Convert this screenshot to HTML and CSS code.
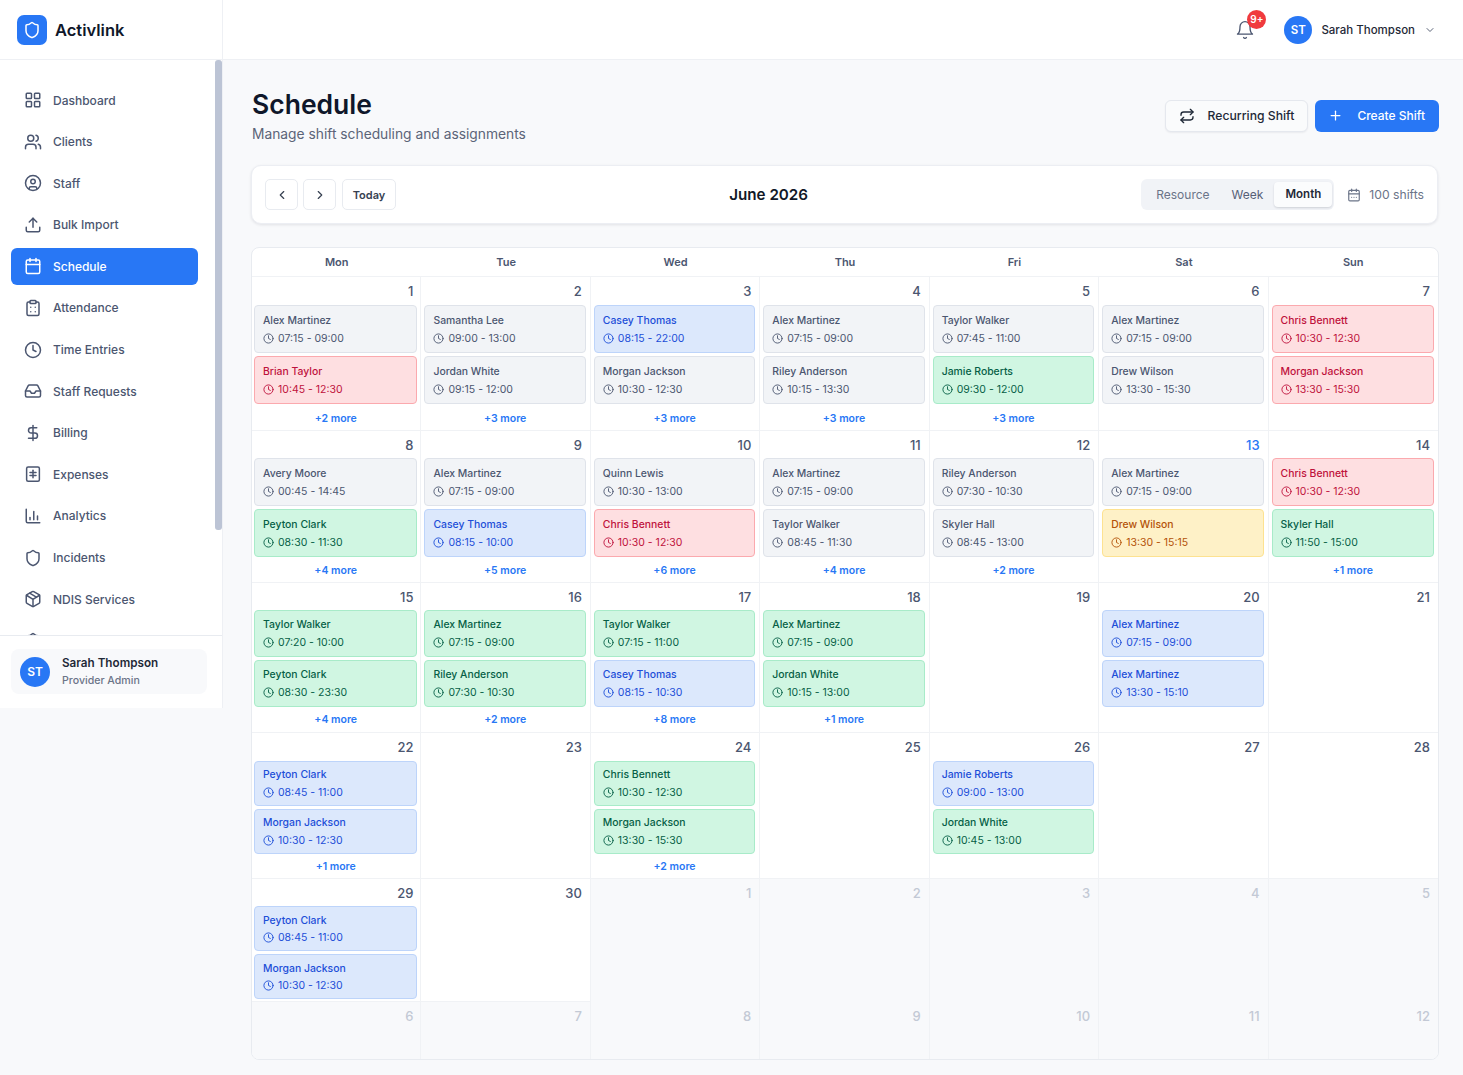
FILE: index.html
```html
<!DOCTYPE html>
<html lang="en">
<head>
    <meta charset="UTF-8">
    <meta name="viewport" content="width=device-width, initial-scale=1.0">
    <title>Activlink - Schedule</title>
    <link rel="stylesheet" href="styles.css">
</head>
<body>

    <!-- Shared icons -->
    <svg class="sprite" xmlns="http://www.w3.org/2000/svg">
        <symbol id="i-grid" viewBox="0 0 24 24"><rect x="3" y="3" width="7" height="7" rx="1"/><rect x="14" y="3" width="7" height="7" rx="1"/><rect x="14" y="14" width="7" height="7" rx="1"/><rect x="3" y="14" width="7" height="7" rx="1"/></symbol>
        <symbol id="i-users" viewBox="0 0 24 24"><path d="M16 21v-2a4 4 0 0 0-4-4H6a4 4 0 0 0-4 4v2"/><circle cx="9" cy="7" r="4"/><path d="M22 21v-2a4 4 0 0 0-3-3.87"/><path d="M16 3.13a4 4 0 0 1 0 7.75"/></symbol>
        <symbol id="i-user" viewBox="0 0 24 24"><circle cx="12" cy="12" r="10"/><circle cx="12" cy="10" r="3"/><path d="M7 20.662V19a2 2 0 0 1 2-2h6a2 2 0 0 1 2 2v1.662"/></symbol>
        <symbol id="i-upload" viewBox="0 0 24 24"><path d="M21 15v4a2 2 0 0 1-2 2H5a2 2 0 0 1-2-2v-4"/><path d="M17 8l-5-5-5 5"/><path d="M12 3v12"/></symbol>
        <symbol id="i-calendar" viewBox="0 0 24 24"><rect x="3" y="4" width="18" height="18" rx="2"/><path d="M16 2v4"/><path d="M8 2v4"/><path d="M3 10h18"/></symbol>
        <symbol id="i-calendar-days" viewBox="0 0 24 24"><rect x="3" y="4" width="18" height="18" rx="2"/><path d="M16 2v4"/><path d="M8 2v4"/><path d="M3 10h18"/><path d="M8 16h.01"/><path d="M12 16h.01"/><path d="M16 16h.01"/></symbol>
        <symbol id="i-attendance" viewBox="0 0 24 24"><rect x="8" y="2" width="8" height="4" rx="1"/><path d="M16 4h2a2 2 0 0 1 2 2v14a2 2 0 0 1-2 2H6a2 2 0 0 1-2-2V6a2 2 0 0 1 2-2h2"/><path d="M9 11h.01"/><path d="M15 11h.01"/><path d="M9 17h.01"/><path d="M15 17h.01"/></symbol>
        <symbol id="i-clock" viewBox="0 0 24 24"><circle cx="12" cy="12" r="10"/><path d="M12 6v6l4 2"/></symbol>
        <symbol id="i-inbox" viewBox="0 0 24 24"><path d="M22 12h-6l-2 3h-4l-2-3H2"/><path d="M5.45 5.11 2 12v6a2 2 0 0 0 2 2h16a2 2 0 0 0 2-2v-6l-3.45-6.89A2 2 0 0 0 16.76 4H7.24a2 2 0 0 0-1.79 1.11z"/></symbol>
        <symbol id="i-dollar" viewBox="0 0 24 24"><path d="M12 2v20"/><path d="M17 5H9.5a3.5 3.5 0 0 0 0 7h5a3.5 3.5 0 0 1 0 7H6"/></symbol>
        <symbol id="i-expenses" viewBox="0 0 24 24"><rect x="3.5" y="2.5" width="17" height="19" rx="2"/><path d="M12 7v10"/><path d="M8 10h8"/><path d="M8 14h8"/></symbol>
        <symbol id="i-chart" viewBox="0 0 24 24"><path d="M3 3v16a2 2 0 0 0 2 2h16"/><path d="M18 17v-5"/><path d="M13 17V6"/><path d="M8 17v-3"/></symbol>
        <symbol id="i-shield" viewBox="0 0 24 24"><path d="M20 13c0 5-3.5 7.5-7.66 8.95a1 1 0 0 1-.67-.01C7.5 20.5 4 18 4 13V6a1 1 0 0 1 1-1c2 0 4.5-1.2 6.24-2.72a1.17 1.17 0 0 1 1.52 0C14.51 3.81 17 5 19 5a1 1 0 0 1 1 1z"/></symbol>
        <symbol id="i-package" viewBox="0 0 24 24"><path d="M11 21.73a2 2 0 0 0 2 0l7-4A2 2 0 0 0 21 16V8a2 2 0 0 0-1-1.73l-7-4a2 2 0 0 0-2 0l-7 4A2 2 0 0 0 3 8v8a2 2 0 0 0 1 1.73z"/><path d="M12 22V12"/><path d="m3.3 7 7.703 4.734a2 2 0 0 0 1.994 0L20.7 7"/><path d="m7.5 4.27 9 5.15"/></symbol>
        <symbol id="i-bell" viewBox="0 0 24 24"><path d="M6 8a6 6 0 0 1 12 0c0 7 3 9 3 9H3s3-2 3-9"/><path d="M10.3 21a1.94 1.94 0 0 0 3.4 0"/></symbol>
        <symbol id="i-repeat" viewBox="0 0 24 24"><path d="m17 2 4 4-4 4"/><path d="M3 11v-1a4 4 0 0 1 4-4h14"/><path d="m7 22-4-4 4-4"/><path d="M21 13v1a4 4 0 0 1-4 4H3"/></symbol>
        <symbol id="i-plus" viewBox="0 0 24 24"><path d="M5 12h14"/><path d="M12 5v14"/></symbol>
        <symbol id="i-left" viewBox="0 0 24 24"><path d="m15 18-6-6 6-6"/></symbol>
        <symbol id="i-right" viewBox="0 0 24 24"><path d="m9 18 6-6-6-6"/></symbol>
        <symbol id="i-down" viewBox="0 0 24 24"><path d="m6 9 6 6 6-6"/></symbol>
    </svg>

    <!-- Sidebar -->
    <aside class="sidebar">
        <div class="brand">
            <span class="brand-logo"><svg class="icon"><use href="#i-shield"/></svg></span>
            <span class="brand-name">Activlink</span>
        </div>

        <nav class="nav">
            <a class="nav-item"><svg class="icon"><use href="#i-grid"/></svg>Dashboard</a>
            <a class="nav-item"><svg class="icon"><use href="#i-users"/></svg>Clients</a>
            <a class="nav-item"><svg class="icon"><use href="#i-user"/></svg>Staff</a>
            <a class="nav-item"><svg class="icon"><use href="#i-upload"/></svg>Bulk Import</a>
            <a class="nav-item active"><svg class="icon"><use href="#i-calendar"/></svg>Schedule</a>
            <a class="nav-item"><svg class="icon"><use href="#i-attendance"/></svg>Attendance</a>
            <a class="nav-item"><svg class="icon"><use href="#i-clock"/></svg>Time Entries</a>
            <a class="nav-item"><svg class="icon"><use href="#i-inbox"/></svg>Staff Requests</a>
            <a class="nav-item"><svg class="icon"><use href="#i-dollar"/></svg>Billing</a>
            <a class="nav-item"><svg class="icon"><use href="#i-expenses"/></svg>Expenses</a>
            <a class="nav-item"><svg class="icon"><use href="#i-chart"/></svg>Analytics</a>
            <a class="nav-item"><svg class="icon"><use href="#i-shield"/></svg>Incidents</a>
            <a class="nav-item"><svg class="icon"><use href="#i-package"/></svg>NDIS Services</a>
            <a class="nav-item"><svg class="icon"><use href="#i-shield"/></svg></a>
            <span class="nav-thumb"></span>
        </nav>

        <div class="sidebar-footer">
            <div class="account">
                <span class="avatar">ST</span>
                <div>
                    <div class="account-name">Sarah Thompson</div>
                    <div class="account-role">Provider Admin</div>
                </div>
            </div>
        </div>
    </aside>

    <div class="main">
        <!-- Top bar -->
        <header class="topbar">
            <button class="bell">
                <svg class="icon"><use href="#i-bell"/></svg>
                <span class="bell-badge">9+</span>
            </button>
            <span class="avatar avatar-top">ST</span>
            <span class="topbar-name">Sarah Thompson</span>
            <svg class="icon topbar-chevron"><use href="#i-down"/></svg>
        </header>

        <div class="content">
            <!-- Page heading -->
            <div class="page-head">
                <div>
                    <h1>Schedule</h1>
                    <p>Manage shift scheduling and assignments</p>
                </div>
                <div class="page-actions">
                    <button class="btn btn-light"><svg class="icon"><use href="#i-repeat"/></svg>Recurring Shift</button>
                    <button class="btn btn-primary"><svg class="icon"><use href="#i-plus"/></svg>Create Shift</button>
                </div>
            </div>

            <!-- Toolbar -->
            <div class="toolbar">
                <div class="toolbar-nav">
                    <button class="nav-btn"><svg class="icon"><use href="#i-left"/></svg></button>
                    <button class="nav-btn"><svg class="icon"><use href="#i-right"/></svg></button>
                    <button class="nav-btn today-btn">Today</button>
                </div>
                <div class="month-title">June 2026</div>
                <div class="toolbar-right">
                    <div class="views">
                        <span class="view view-resource">Resource</span>
                        <span class="view view-week">Week</span>
                        <span class="view view-active">Month</span>
                    </div>
                    <div class="shift-count"><svg class="icon"><use href="#i-calendar-days"/></svg>100 shifts</div>
                </div>
            </div>

            <!-- Calendar -->
            <div class="calendar">
                <div class="week weekdays">
                    <div>Mon</div><div>Tue</div><div>Wed</div><div>Thu</div><div>Fri</div><div>Sat</div><div>Sun</div>
                </div>

                <div class="week week-1">
                    <div class="day"><div class="date">1</div>
                        <div class="shift grey"><b>Alex Martinez</b><span><svg class="icon"><use href="#i-clock"/></svg>07:15 - 09:00</span></div>
                        <div class="shift red"><b>Brian Taylor</b><span><svg class="icon"><use href="#i-clock"/></svg>10:45 - 12:30</span></div>
                        <a class="more">+2 more</a></div>
                    <div class="day"><div class="date">2</div>
                        <div class="shift grey"><b>Samantha Lee</b><span><svg class="icon"><use href="#i-clock"/></svg>09:00 - 13:00</span></div>
                        <div class="shift grey"><b>Jordan White</b><span><svg class="icon"><use href="#i-clock"/></svg>09:15 - 12:00</span></div>
                        <a class="more">+3 more</a></div>
                    <div class="day"><div class="date">3</div>
                        <div class="shift blue"><b>Casey Thomas</b><span><svg class="icon"><use href="#i-clock"/></svg>08:15 - 22:00</span></div>
                        <div class="shift grey"><b>Morgan Jackson</b><span><svg class="icon"><use href="#i-clock"/></svg>10:30 - 12:30</span></div>
                        <a class="more">+3 more</a></div>
                    <div class="day"><div class="date">4</div>
                        <div class="shift grey"><b>Alex Martinez</b><span><svg class="icon"><use href="#i-clock"/></svg>07:15 - 09:00</span></div>
                        <div class="shift grey"><b>Riley Anderson</b><span><svg class="icon"><use href="#i-clock"/></svg>10:15 - 13:30</span></div>
                        <a class="more">+3 more</a></div>
                    <div class="day"><div class="date">5</div>
                        <div class="shift grey"><b>Taylor Walker</b><span><svg class="icon"><use href="#i-clock"/></svg>07:45 - 11:00</span></div>
                        <div class="shift green"><b>Jamie Roberts</b><span><svg class="icon"><use href="#i-clock"/></svg>09:30 - 12:00</span></div>
                        <a class="more">+3 more</a></div>
                    <div class="day"><div class="date">6</div>
                        <div class="shift grey"><b>Alex Martinez</b><span><svg class="icon"><use href="#i-clock"/></svg>07:15 - 09:00</span></div>
                        <div class="shift grey"><b>Drew Wilson</b><span><svg class="icon"><use href="#i-clock"/></svg>13:30 - 15:30</span></div></div>
                    <div class="day"><div class="date">7</div>
                        <div class="shift red"><b>Chris Bennett</b><span><svg class="icon"><use href="#i-clock"/></svg>10:30 - 12:30</span></div>
                        <div class="shift red"><b>Morgan Jackson</b><span><svg class="icon"><use href="#i-clock"/></svg>13:30 - 15:30</span></div></div>
                </div>

                <div class="week week-2">
                    <div class="day"><div class="date">8</div>
                        <div class="shift grey"><b>Avery Moore</b><span><svg class="icon"><use href="#i-clock"/></svg>00:45 - 14:45</span></div>
                        <div class="shift green"><b>Peyton Clark</b><span><svg class="icon"><use href="#i-clock"/></svg>08:30 - 11:30</span></div>
                        <a class="more">+4 more</a></div>
                    <div class="day"><div class="date">9</div>
                        <div class="shift grey"><b>Alex Martinez</b><span><svg class="icon"><use href="#i-clock"/></svg>07:15 - 09:00</span></div>
                        <div class="shift blue"><b>Casey Thomas</b><span><svg class="icon"><use href="#i-clock"/></svg>08:15 - 10:00</span></div>
                        <a class="more">+5 more</a></div>
                    <div class="day"><div class="date">10</div>
                        <div class="shift grey"><b>Quinn Lewis</b><span><svg class="icon"><use href="#i-clock"/></svg>10:30 - 13:00</span></div>
                        <div class="shift red"><b>Chris Bennett</b><span><svg class="icon"><use href="#i-clock"/></svg>10:30 - 12:30</span></div>
                        <a class="more">+6 more</a></div>
                    <div class="day"><div class="date">11</div>
                        <div class="shift grey"><b>Alex Martinez</b><span><svg class="icon"><use href="#i-clock"/></svg>07:15 - 09:00</span></div>
                        <div class="shift grey"><b>Taylor Walker</b><span><svg class="icon"><use href="#i-clock"/></svg>08:45 - 11:30</span></div>
                        <a class="more">+4 more</a></div>
                    <div class="day"><div class="date">12</div>
                        <div class="shift grey"><b>Riley Anderson</b><span><svg class="icon"><use href="#i-clock"/></svg>07:30 - 10:30</span></div>
                        <div class="shift grey"><b>Skyler Hall</b><span><svg class="icon"><use href="#i-clock"/></svg>08:45 - 13:00</span></div>
                        <a class="more">+2 more</a></div>
                    <div class="day"><div class="date date-today">13</div>
                        <div class="shift grey"><b>Alex Martinez</b><span><svg class="icon"><use href="#i-clock"/></svg>07:15 - 09:00</span></div>
                        <div class="shift yellow"><b>Drew Wilson</b><span><svg class="icon"><use href="#i-clock"/></svg>13:30 - 15:15</span></div></div>
                    <div class="day"><div class="date">14</div>
                        <div class="shift red"><b>Chris Bennett</b><span><svg class="icon"><use href="#i-clock"/></svg>10:30 - 12:30</span></div>
                        <div class="shift green"><b>Skyler Hall</b><span><svg class="icon"><use href="#i-clock"/></svg>11:50 - 15:00</span></div>
                        <a class="more">+1 more</a></div>
                </div>

                <div class="week week-3">
                    <div class="day"><div class="date">15</div>
                        <div class="shift green"><b>Taylor Walker</b><span><svg class="icon"><use href="#i-clock"/></svg>07:20 - 10:00</span></div>
                        <div class="shift green"><b>Peyton Clark</b><span><svg class="icon"><use href="#i-clock"/></svg>08:30 - 23:30</span></div>
                        <a class="more">+4 more</a></div>
                    <div class="day"><div class="date">16</div>
                        <div class="shift green"><b>Alex Martinez</b><span><svg class="icon"><use href="#i-clock"/></svg>07:15 - 09:00</span></div>
                        <div class="shift green"><b>Riley Anderson</b><span><svg class="icon"><use href="#i-clock"/></svg>07:30 - 10:30</span></div>
                        <a class="more">+2 more</a></div>
                    <div class="day"><div class="date">17</div>
                        <div class="shift green"><b>Taylor Walker</b><span><svg class="icon"><use href="#i-clock"/></svg>07:15 - 11:00</span></div>
                        <div class="shift blue"><b>Casey Thomas</b><span><svg class="icon"><use href="#i-clock"/></svg>08:15 - 10:30</span></div>
                        <a class="more">+8 more</a></div>
                    <div class="day"><div class="date">18</div>
                        <div class="shift green"><b>Alex Martinez</b><span><svg class="icon"><use href="#i-clock"/></svg>07:15 - 09:00</span></div>
                        <div class="shift green"><b>Jordan White</b><span><svg class="icon"><use href="#i-clock"/></svg>10:15 - 13:00</span></div>
                        <a class="more">+1 more</a></div>
                    <div class="day"><div class="date">19</div></div>
                    <div class="day"><div class="date">20</div>
                        <div class="shift blue"><b>Alex Martinez</b><span><svg class="icon"><use href="#i-clock"/></svg>07:15 - 09:00</span></div>
                        <div class="shift blue"><b>Alex Martinez</b><span><svg class="icon"><use href="#i-clock"/></svg>13:30 - 15:10</span></div></div>
                    <div class="day"><div class="date">21</div></div>
                </div>

                <div class="week week-4">
                    <div class="day"><div class="date">22</div>
                        <div class="shift blue"><b>Peyton Clark</b><span><svg class="icon"><use href="#i-clock"/></svg>08:45 - 11:00</span></div>
                        <div class="shift blue"><b>Morgan Jackson</b><span><svg class="icon"><use href="#i-clock"/></svg>10:30 - 12:30</span></div>
                        <a class="more">+1 more</a></div>
                    <div class="day"><div class="date">23</div></div>
                    <div class="day"><div class="date">24</div>
                        <div class="shift green"><b>Chris Bennett</b><span><svg class="icon"><use href="#i-clock"/></svg>10:30 - 12:30</span></div>
                        <div class="shift green"><b>Morgan Jackson</b><span><svg class="icon"><use href="#i-clock"/></svg>13:30 - 15:30</span></div>
                        <a class="more">+2 more</a></div>
                    <div class="day"><div class="date">25</div></div>
                    <div class="day"><div class="date">26</div>
                        <div class="shift blue"><b>Jamie Roberts</b><span><svg class="icon"><use href="#i-clock"/></svg>09:00 - 13:00</span></div>
                        <div class="shift green"><b>Jordan White</b><span><svg class="icon"><use href="#i-clock"/></svg>10:45 - 13:00</span></div></div>
                    <div class="day"><div class="date">27</div></div>
                    <div class="day"><div class="date">28</div></div>
                </div>

                <div class="week week-5">
                    <div class="day"><div class="date">29</div>
                        <div class="shift blue"><b>Peyton Clark</b><span><svg class="icon"><use href="#i-clock"/></svg>08:45 - 11:00</span></div>
                        <div class="shift blue"><b>Morgan Jackson</b><span><svg class="icon"><use href="#i-clock"/></svg>10:30 - 12:30</span></div></div>
                    <div class="day"><div class="date">30</div></div>
                    <div class="day outside"><div class="date">1</div></div>
                    <div class="day outside"><div class="date">2</div></div>
                    <div class="day outside"><div class="date">3</div></div>
                    <div class="day outside"><div class="date">4</div></div>
                    <div class="day outside"><div class="date">5</div></div>
                </div>

                <div class="week week-6">
                    <div class="day outside"><div class="date">6</div></div>
                    <div class="day outside"><div class="date">7</div></div>
                    <div class="day outside"><div class="date">8</div></div>
                    <div class="day outside"><div class="date">9</div></div>
                    <div class="day outside"><div class="date">10</div></div>
                    <div class="day outside"><div class="date">11</div></div>
                    <div class="day outside"><div class="date">12</div></div>
                </div>
            </div>
        </div>
    </div>

</body>
</html>
```

FILE: styles.css
```css
body {
    font-family: 'Inter', sans-serif;
    background-color: #f8f9fb;
    margin: 0;
    padding: 0;
    display: flex;
    align-items: flex-start;
    height: 1075px;
    overflow: hidden;
    color: #111827;
}

.sprite {
    display: none;
}

.icon {
    width: 18px;
    height: 18px;
    fill: none;
    stroke: currentColor;
    stroke-width: 2;
    stroke-linecap: round;
    stroke-linejoin: round;
    flex: none;
}

button {
    font-family: inherit;
}

/* Sidebar */
.sidebar {
    width: 223px;
    height: 708px;
    box-sizing: border-box;
    flex: none;
    display: flex;
    flex-direction: column;
    background-color: #fff;
    border-right: 1px solid #eef0f4;
}

.brand {
    height: 60px;
    box-sizing: border-box;
    flex: none;
    display: flex;
    align-items: center;
    gap: 8px;
    padding-left: 17px;
    border-bottom: 1px solid #eef0f4;
}

.brand-logo {
    width: 30px;
    height: 30px;
    border-radius: 7px;
    background-color: #2877f5;
    color: #fff;
    display: flex;
    align-items: center;
    justify-content: center;
}

.brand-name {
    font-size: 16.5px;
    font-weight: 600;
    color: #0f172a;
}

.nav {
    flex: 1;
    min-height: 0;
    overflow: hidden;
    position: relative;
    display: flex;
    flex-direction: column;
    gap: 4.6px;
    padding: 21.5px 24px 0 11px;
}

.nav-item {
    height: 37px;
    flex: none;
    display: flex;
    align-items: center;
    gap: 11px;
    padding-left: 13px;
    border-radius: 6px;
    font-size: 12px;
    font-weight: 500;
    color: #4b5670;
}

.nav-item.active {
    background-color: #2877f5;
    color: #fff;
}

.nav-thumb {
    position: absolute;
    top: 0;
    right: 0;
    width: 7px;
    height: 470px;
    background-color: #bcc4d5;
    border-radius: 3px;
}

.sidebar-footer {
    height: 73px;
    box-sizing: border-box;
    flex: none;
    padding: 13px 15px 14px 11px;
    border-top: 1px solid #e8ebf0;
}

.account {
    height: 45px;
    display: flex;
    align-items: center;
    gap: 12px;
    padding-left: 9px;
    border-radius: 8px;
    background-color: #f8f9fb;
}

.avatar {
    width: 30px;
    height: 30px;
    flex: none;
    border-radius: 50%;
    background-color: #2877f5;
    color: #fff;
    font-size: 12px;
    font-weight: 600;
    display: flex;
    align-items: center;
    justify-content: center;
}

.avatar-top {
    width: 28px;
    height: 28px;
    font-size: 11.5px;
}

.account-name {
    font-size: 11.7px;
    font-weight: 600;
    color: #1f2937;
    line-height: 17px;
}

.account-role {
    font-size: 10.6px;
    font-weight: 500;
    color: #6b7488;
    line-height: 17px;
}

/* Main column */
.main {
    flex: 1;
    min-width: 0;
}

.topbar {
    height: 60px;
    box-sizing: border-box;
    display: flex;
    align-items: center;
    background-color: #fff;
    border-bottom: 1px solid #eef0f4;
    padding-right: 27px;
    justify-content: flex-end;
}

.bell {
    position: relative;
    background: none;
    border: none;
    padding: 0;
    width: 20px;
    height: 20px;
    margin-right: 29px;
    color: #4b5670;
}

.bell .icon {
    width: 20px;
    height: 20px;
    stroke-width: 1.6;
}

.bell-badge {
    position: absolute;
    top: -10px;
    right: -11px;
    width: 19px;
    height: 19px;
    border-radius: 50%;
    background-color: #f03a3e;
    color: #fff;
    font-size: 10px;
    font-weight: 600;
    line-height: 19px;
    text-align: center;
}

.topbar-name {
    font-size: 11.5px;
    font-weight: 500;
    color: #1f2937;
    margin-left: 9px;
}

.topbar-chevron {
    width: 12px;
    height: 12px;
    margin-left: 9px;
    color: #5b6478;
}

.content {
    padding: 0 25px 0 28px;
}

.page-head {
    height: 105px;
    box-sizing: border-box;
    display: flex;
    justify-content: space-between;
    padding: 27px 0 0 1px;
}

h1 {
    font-size: 26.5px;
    font-weight: 600;
    line-height: 34px;
    margin: 0;
    color: #0f172a;
}

.page-head p {
    font-size: 13.8px;
    line-height: 20px;
    margin: 3px 0 0;
    color: #5b6478;
}

.page-actions {
    display: flex;
    gap: 7px;
    padding-top: 13px;
    margin-right: -1px;
}

.btn {
    height: 32px;
    box-sizing: border-box;
    display: flex;
    align-items: center;
    border-radius: 6px;
    font-size: 12px;
    font-weight: 500;
}

.btn-light {
    padding: 0 13px 1px 13px;
    gap: 13px;
    font-size: 12.2px;
    background-color: #fafbfc;
    border: 1px solid #e5e8ee;
    color: #1f2937;
    box-shadow: 0 1px 2px rgba(15, 23, 42, 0.06);
}

.btn-light .icon {
    width: 16px;
    height: 16px;
}

.btn-primary {
    padding: 0 14px 1px 13px;
    gap: 14px;
    background-color: #2877f5;
    border: none;
    color: #fff;
}

.btn-primary .icon {
    width: 15px;
    height: 15px;
}

/* Toolbar */
.toolbar {
    height: 59px;
    box-sizing: border-box;
    display: flex;
    align-items: center;
    justify-content: space-between;
    padding: 0 13px;
    background-color: #fff;
    border: 1px solid #eceef3;
    border-radius: 10px;
    box-shadow: 0 1px 3px rgba(15, 23, 42, 0.1);
}

.toolbar-nav {
    display: flex;
    gap: 5px;
}

.nav-btn {
    width: 33px;
    height: 31px;
    box-sizing: border-box;
    padding: 0;
    display: flex;
    align-items: center;
    justify-content: center;
    background-color: #fff;
    border: 1px solid #e8ebf0;
    border-radius: 5px;
    color: #374151;
}

.nav-btn .icon {
    width: 14px;
    height: 14px;
}

.today-btn {
    width: 54px;
    margin-left: 1px;
    font-size: 11px;
    font-weight: 600;
}

.month-title {
    font-size: 15.2px;
    font-weight: 600;
    color: #111827;
}

.toolbar-right {
    display: flex;
    align-items: center;
    gap: 13px;
}

.views {
    width: 193px;
    height: 31px;
    box-sizing: border-box;
    display: flex;
    align-items: center;
    padding-left: 15px;
    background-color: #f1f3f7;
    border-radius: 6px;
}

.view {
    font-size: 12px;
    color: #6b7488;
}

.view-week {
    margin-left: 22px;
    color: #566077;
}

.view-active {
    margin-left: 11px;
    width: 58px;
    height: 25px;
    line-height: 25px;
    text-align: center;
    background-color: #fbfcfd;
    border-radius: 4px;
    box-shadow: 0 1px 2px rgba(15, 23, 42, 0.15);
    font-size: 11.5px;
    font-weight: 600;
    color: #1f2937;
}

.shift-count {
    display: flex;
    align-items: center;
    gap: 8px;
    font-size: 12.2px;
    color: #6b7488;
}

.shift-count .icon {
    width: 14px;
    height: 14px;
}

/* Calendar */
.calendar {
    margin: 23px -1px 0 0;
    background-color: #fff;
    border: 1px solid #e8ebf0;
    border-radius: 8px;
    overflow: hidden;
}

.week {
    display: grid;
    grid-template-columns: repeat(7, 1fr);
    border-bottom: 1px solid #f0f2f5;
    --line-gap: 5px;
    --more-gap: 5px;
}

.week:last-child {
    border-bottom: none;
}

.weekdays {
    height: 28px;
    align-items: center;
    text-align: center;
    font-size: 11px;
    font-weight: 600;
    color: #4b5670;
}

.week-1 { height: 153px; --card: 48px; --date: 22px; }
.week-2 { height: 151px; --card: 48px; --date: 21px; --more-gap: 4px; }
.week-3 { height: 149px; --card: 47px; --date: 21px; --more-gap: 3px; }
.week-4 { height: 145px; --card: 45px; --date: 22px; --more-gap: 3px; --line-gap: 4.5px; }
.week-5 { height: 122px; --card: 45px; --date: 21px; --line-gap: 4px; }
.week-6 { height: 57px; --date: 20px; }

.day {
    padding: 6px 4px 0 3px;
    border-right: 1px solid #f0f2f5;
    display: flex;
    flex-direction: column;
    min-width: 0;
}

.day:first-child {
    padding: 6px 3px 0 2px;
}

.day:last-child {
    border-right: none;
}

.date {
    height: var(--date);
    flex: none;
    text-align: right;
    padding-right: 4px;
    font-size: 13px;
    font-weight: 500;
    line-height: 16px;
    color: #4b5670;
}

.date-today {
    color: #2877f5;
}

.outside {
    background-color: #f8f9fb;
}

.outside .date {
    color: #c3c9d5;
}

.shift {
    height: var(--card);
    box-sizing: border-box;
    flex: none;
    display: flex;
    flex-direction: column;
    justify-content: center;
    gap: var(--line-gap);
    padding-left: 8px;
    margin-bottom: 3px;
    border: 1px solid;
    border-radius: 4px;
    font-size: 10.5px;
    line-height: 13px;
}

.shift b {
    font-size: 10.4px;
    font-weight: 500;
}

.shift span {
    display: flex;
    align-items: center;
    gap: 4px;
}

.shift .icon {
    width: 11px;
    height: 11px;
}

.grey {
    background-color: #f2f4f7;
    border-color: #dfe3ea;
    color: #4b5670;
}

.red {
    background-color: #fedfe1;
    border-color: #fba9ae;
    color: #be123c;
}

.blue {
    background-color: #dce8fc;
    border-color: #bdd4fa;
    color: #1d4ed8;
}

.green {
    background-color: #d0f6e2;
    border-color: #a8ebc9;
    color: #065f46;
}

.yellow {
    background-color: #fef1c7;
    border-color: #fde291;
    color: #b45309;
}

.more {
    text-align: center;
    font-size: 10.5px;
    font-weight: 600;
    line-height: 13px;
    color: #2877f5;
    margin-top: var(--more-gap);
}
```
